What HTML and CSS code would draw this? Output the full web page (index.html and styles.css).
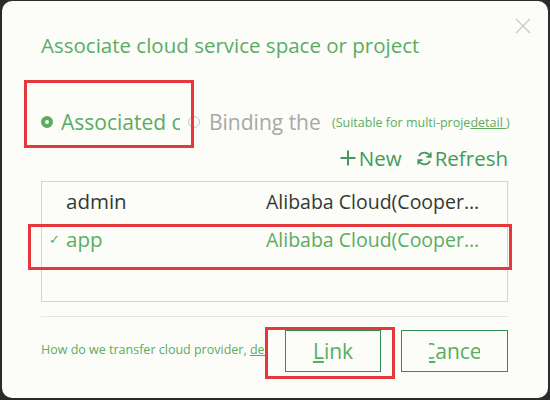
FILE: index.html
```html
<!DOCTYPE html>
<html>
<head>
<meta charset="utf-8">
<link rel="stylesheet" href="styles.css">
</head>
<body>
<div class="dialog">
  <button class="close" aria-label="close">
    <svg width="16" height="16" viewBox="0 0 16 16"><path d="M1 1L15 15M15 1L1 15" stroke="#c8c8c4" stroke-width="1.3" fill="none"/></svg>
  </button>
  <h1 class="title">Associate cloud service space or project</h1>

  <div class="radios">
    <label class="radio on"><span class="dot"></span><span class="rlabel w1">Associated cloud service space</span></label>
    <label class="radio"><span class="dot"></span><span class="rlabel w2">Binding the space</span></label>
    <span class="hint">(Suitable for multi-proje<a class="link">detail </a>)</span>
  </div>

  <div class="tools">
    <span class="tool"><svg width="18" height="18" viewBox="0 0 18 18"><path d="M9 1.5V16.5M1.5 9H16.5" stroke="#3f9b5c" stroke-width="2" fill="none"/></svg>New</span>
    <span class="tool"><svg width="17" height="17" viewBox="0 0 18 18"><path d="M14.6 6.2A6.3 6.3 0 0 0 3.2 6.4M3.4 11.8A6.3 6.3 0 0 0 14.8 11.6" stroke="#3f9b5c" stroke-width="1.9" fill="none"/><path d="M15.6 2.6V7.2H11" stroke="#3f9b5c" stroke-width="1.9" fill="none"/><path d="M2.4 15.4V10.8H7" stroke="#3f9b5c" stroke-width="1.9" fill="none"/></svg>Refresh</span>
  </div>

  <div class="table">
    <div class="row"><span class="check"></span><span class="name">admin</span><span class="prov">Alibaba Cloud(Cooperation)</span></div>
    <div class="row sel"><span class="check">✓</span><span class="name">app</span><span class="prov">Alibaba Cloud(Cooperation)</span></div>
  </div>

  <div class="divider"></div>

  <div class="footer">
    <span class="help">How do we transfer cloud provider, <a class="link">detail</a></span>
    <button class="btn"><span class="btxt"><u>L</u>ink</span></button>
    <button class="btn cancel"><span class="btxt"><u>C</u>ancel</span></button>
  </div>

  <div class="mark m1"></div>
  <div class="mark m2"></div>
  <div class="mark m3"></div>
</div>
</body>
</html>
```
FILE: styles.css
```css
html, body { margin: 0; padding: 0; }
body {
  background: #2a2b2a;
  width: 550px;
  height: 400px;
  overflow: hidden;
  font-family: "Open Sans", "Noto Sans", sans-serif;
}
.dialog {
  position: relative;
  box-sizing: border-box;
  margin: 1px 2px 0 2px;
  width: 546px;
  height: 397px;
  background: #fcfcf8;
  border-radius: 10px;
  padding: 0 40px 0 39px;
  display: flex;
  flex-direction: column;
}
.close {
  position: absolute;
  top: 17px;
  right: 17px;
  border: 0;
  background: none;
  padding: 0;
  width: 16px;
  height: 16px;
}
.title {
  margin: 30px 0 0 0;
  font-weight: normal;
  font-size: 20.5px;
  line-height: 28px;
  color: #5aac63;
  letter-spacing: 0;
}
.radios {
  margin-top: 50px;
  display: flex;
  align-items: center;
  height: 26px;
}
.radio {
  display: flex;
  align-items: center;
}
.dot {
  box-sizing: border-box;
  width: 12px;
  height: 12px;
  border-radius: 50%;
  border: 1.5px solid #c4c4c0;
  margin: 0 8px 0 0;
  flex: none;
}
.radio + .radio .dot { margin-right: 9px; }
.radio.on .dot {
  border: 4px solid #5aac63;
  background: #fcfcf8;
}
.rlabel {
  font-size: 21px;
  line-height: 26px;
  white-space: nowrap;
  overflow: hidden;
  color: #a8a8a6;
}
.radio.on .rlabel { color: #5aac63; }
.w1 { width: 119px; margin-right: 8px; }
.w2 { width: 118px; }
.hint {
  margin-left: 5px;
  font-size: 12.5px;
  color: #5aac63;
  white-space: nowrap;
}
.link { text-decoration: underline; color: #5aac63; }
.tools {
  margin-top: 9px;
  display: flex;
  justify-content: flex-end;
  gap: 14px;
  height: 28px;
  align-items: center;
}
.tool {
  display: flex;
  align-items: center;
  gap: 2px;
  font-size: 20.5px;
  color: #3f9b5c;
}
.table {
  margin-top: 9px;
  height: 121px;
  box-sizing: border-box;
  border: 1px solid #d3d3d0;
  padding-top: 0;
}
.row {
  display: flex;
  align-items: center;
  height: 38px;
  font-size: 20.5px;
  color: #333a33;
}
.row.sel { color: #5aac63; }
.check {
  width: 24px;
  flex: none;
  font-size: 13px;
  text-align: center;
  color: #5aac63;
}
.name { width: 200px; flex: none; }
.prov {
  width: 214px;
  flex: none;
  font-size: 19.5px;
  white-space: nowrap;
  overflow: hidden;
  text-overflow: ellipsis;
}
.divider {
  margin-top: 14px;
  height: 1px;
  background: #e4e4e0;
}
.footer {
  margin-top: 13px;
  display: flex;
  align-items: center;
}
.help {
  width: 224px;
  overflow: hidden;
  white-space: nowrap;
  font-size: 12.5px;
  line-height: 16px;
  margin-top: -3px;
  color: #5aac63;
  margin-right: 20px;
}
.btn {
  box-sizing: border-box;
  height: 42px;
  width: 96px;
  border: 1px solid #2f9050;
  background: #fcfcf8;
  font-family: inherit;
  font-size: 21px;
  color: #5aac63;
  display: flex;
  justify-content: center;
  align-items: center;
  padding: 0;
}
.btn.cancel { width: 107px; margin-left: 20px; }
.btxt { white-space: nowrap; display: flex; justify-content: center; }
.cancel .btxt { width: 51px; overflow: hidden; }
.mark {
  position: absolute;
  border: 3px solid #e5383b;
  box-sizing: border-box;
}
.m1 { left: 22px; top: 79px; width: 170px; height: 68px; }
.m2 { left: 26px; top: 223px; width: 484px; height: 46px; }
.m3 { left: 263px; top: 326px; width: 130px; height: 52px; }
```
